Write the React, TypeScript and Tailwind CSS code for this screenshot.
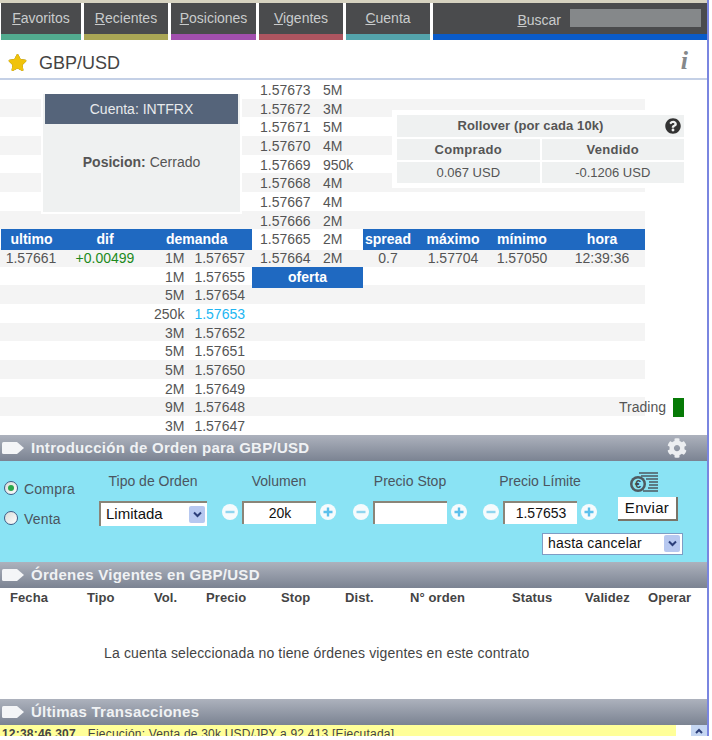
import { FaCog, FaQuestionCircle, FaStar } from 'react-icons/fa';

const TABS = [
  { key: 'F', rest: 'avoritos', w: 'w-[80px]', color: 'border-[#52ab8f]' },
  { key: 'R', rest: 'ecientes', w: 'w-[84px]', color: 'border-[#aaa655]' },
  { key: 'P', rest: 'osiciones', w: 'w-[85px]', color: 'border-[#a24fae]' },
  { key: 'V', rest: 'igentes', w: 'w-[84px]', color: 'border-[#ad5560]' },
  { key: 'C', rest: 'uenta', w: 'w-[84px]', color: 'border-[#54a4ac]' },
];

const ASKS = [
  ['1.57673', '5M'], ['1.57672', '3M'], ['1.57671', '5M'], ['1.57670', '4M'], ['1.57669', '950k'],
  ['1.57668', '4M'], ['1.57667', '4M'], ['1.57666', '2M'], ['1.57665', '2M'], ['1.57664', '2M'],
];

const BIDS = [
  ['5M', '1.57654'], ['250k', '1.57653'], ['3M', '1.57652'], ['5M', '1.57651'],
  ['5M', '1.57650'], ['2M', '1.57649'], ['9M', '1.57648'], ['3M', '1.57647'],
];

const ORDER_COLS = [
  ['Fecha', 'w-[77px]'], ['Tipo', 'w-[67px]'], ['Vol.', 'w-[52px]'], ['Precio', 'w-[75px]'], ['Stop', 'w-[64px]'],
  ['Dist.', 'w-[65px]'], ['N° orden', 'w-[102px]'], ['Status', 'w-[73px]'], ['Validez', 'w-[63px]'], ['Operar', 'w-[50px]'],
];

const ROW = 'grid h-[18.67px] w-[645px] grid-cols-[62px_86px_104px_111px_50px_80px_58px_94px] items-center';

function SectionBar({ title, children }: { title: string; children?: React.ReactNode }) {
  return (
    <div className="flex h-[26px] items-center bg-gradient-to-b from-[#adb2bd] to-[#7b8392] pl-px pr-5">
      <svg width="24" height="14" viewBox="0 0 24 14" className="mr-[6px] shrink-0">
        <path d="M1 2.5Q1 1 2.5 1H16L23 7L16 13H2.5Q1 13 1 11.5Z" fill="#f4f5f7" />
      </svg>
      <span className="flex-1 pt-[2px] text-[15px] font-bold tracking-[0.27px] text-[#f0f2f4]">{title}</span>
      {children}
    </div>
  );
}

function Chevron() {
  return (
    <div className="flex h-[17px] w-[16px] items-center justify-center rounded-[2px] bg-[#b7c8f0]">
      <svg width="9" height="7" viewBox="0 0 9 7">
        <path d="M1 1.5L4.5 5L8 1.5" fill="none" stroke="#2c3f7a" strokeWidth="2" />
      </svg>
    </div>
  );
}

function Round({ plus }: { plus?: boolean }) {
  return (
    <svg width="16" height="16" viewBox="0 0 16 16" className="shrink-0">
      <circle cx="8" cy="8" r="8" fill="#f6fbfd" />
      <path d={plus ? 'M3.5 8H12.5M8 3.5V12.5' : 'M3.5 8H12.5'} stroke={plus ? '#5cc0ec' : '#8fd4ee'} strokeWidth="2.4" />
    </svg>
  );
}

function Stepper({ label, value }: { label: string; value: string }) {
  return (
    <div className="w-[114px]">
      <div className="flex h-[22px] items-center justify-center text-[14px] text-[#4b5560]">{label}</div>
      <div className="mt-2 flex h-[23px] items-center justify-between">
        <Round />
        <div className="flex h-[23px] w-[74px] items-center justify-center border-l-2 border-t-2 border-[#8a8578] bg-white text-[14px] text-[#111]">
          {value}
        </div>
        <Round plus />
      </div>
    </div>
  );
}

function Radio({ on, label }: { on?: boolean; label: string }) {
  return (
    <div className="flex h-[18px] items-center gap-[6px]">
      <div className="flex h-[14px] w-[14px] items-center justify-center rounded-full border-[1.5px] border-[#3f5c86] bg-gradient-to-br from-[#d9dcd8] to-white">
        {on && <div className="h-[6px] w-[6px] rounded-full bg-[#2aa84a]" />}
      </div>
      <span className="mt-[4px] text-[14px] tracking-[0.2px] text-[#4b5560]">{label}</span>
    </div>
  );
}

export default function App() {
  return (
    <div className="h-[740px] w-[712px] overflow-hidden bg-white font-['Liberation_Sans',Arial,sans-serif]">
      <div className="w-[709px] border-r-2 border-[#7a86e0]">
        <div className="h-[3px] bg-[#d6d2c0]" />

        {/* Nav */}
        <div className="flex h-[37px] gap-[3px] pl-px">
          {TABS.map(t => (
            <div key={t.key} className={`flex items-center justify-center border-b-[6px] bg-[#4a4b4d] pb-[1px] text-[14px] text-[#c9cbcc] ${t.w} ${t.color}`}>
              <span><u>{t.key}</u>{t.rest}</span>
            </div>
          ))}
          <div className="flex flex-1 items-start justify-end border-b-[6px] border-[#0a5bc9] bg-[#4a4b4d] pr-[6px] pt-[6px]">
            <span className="mr-[9px] mt-px text-[14px] text-[#c9cbcc]"><u>B</u>uscar</span>
            <div className="h-[18px] w-[131px] bg-[#85888a]" />
          </div>
        </div>

        {/* Heading */}
        <div className="flex h-[40px] border-b-2 border-[#c4d0e6] pl-2 pr-[19px]">
          <FaStar className="mt-[13px] text-[19px] text-[#f0c30c] [filter:drop-shadow(0_0_0.5px_#6b5a10)]" />
          <span className="ml-3 mt-[13px] flex-1 text-[18px] leading-[21px] text-[#444]">GBP/USD</span>
          <span className="mt-[8px] font-['Liberation_Serif',serif] text-[26px] font-bold italic leading-none text-[#85888a]">i</span>
        </div>

        {/* Book */}
        <div className="relative h-[354.7px] text-[14px] text-[#555]">
          {ASKS.map(([price, size], i) => {
            const isHead = i === 8;
            const isFirst = i === 9;
            return (
              <div key={price} className={`${ROW} ${i % 2 === 1 ? 'bg-[#f4f4f4]' : ''}`}>
                {isHead && (
                  <>
                    <div className="ml-px flex h-full items-center justify-center bg-[#1f69c1] font-bold text-white">ultimo</div>
                    <div className="flex h-full items-center justify-center bg-[#1f69c1] font-bold text-white">dif</div>
                    <div className="flex h-full items-center bg-[#1f69c1] pl-[18px] font-bold text-white">demanda</div>
                  </>
                )}
                {isFirst && (
                  <>
                    <div className="text-center">1.57661</div>
                    <div className="text-center text-[#1c8a1c]">+0.00499</div>
                    <div className="flex justify-end whitespace-nowrap pr-[7px]">1M<span className="ml-[10px]">1.57657</span></div>
                  </>
                )}
                <div className={`col-start-4 flex whitespace-nowrap pl-2 ${isHead ? 'bg-white h-full items-center' : ''}`}>
                  <span className="w-[63px]">{price}</span>
                  <span>{size}</span>
                </div>
                {isHead && ['spread', 'máximo', 'mínimo'].map(h => (
                  <div key={h} className="flex h-full items-center justify-center bg-[#1f69c1] font-bold text-white">{h}</div>
                ))}
                {isHead && <div className="flex h-full items-center justify-center bg-[#1f69c1] pl-2 font-bold text-white">hora</div>}
                {isFirst && (
                  <>
                    <div className="text-center">0.7</div>
                    <div className="text-center">1.57704</div>
                    <div className="text-center">1.57050</div>
                    <div className="pl-2 text-center">12:39:36</div>
                  </>
                )}
              </div>
            );
          })}

          <div className={ROW}>
            <div className="col-span-3 flex justify-end whitespace-nowrap pr-[7px]">
              1M<span className="ml-[10px]">1.57655</span>
            </div>
            <div className="flex h-full items-center justify-center bg-[#1f69c1] font-bold text-white">oferta</div>
          </div>

          {BIDS.map(([size, price], i) => (
            <div key={price} className={`${ROW} ${i % 2 === 0 ? 'bg-[#f4f4f4]' : ''}`}>
              <div className="col-span-3 flex justify-end whitespace-nowrap pr-[7px]">
                <span>{size}</span>
                <span className={`ml-[10px] ${price === '1.57653' ? 'text-[#22b6f2]' : ''}`}>{price}</span>
              </div>
            </div>
          ))}

          {/* Cuenta */}
          <div className="absolute left-[41px] top-[12px] h-[122px] w-[201px] bg-white p-[2px]">
            <div className="h-full bg-[#eff1f1]">
              <div className="mx-[2px] flex h-[30px] items-center justify-center bg-[#55647a] text-[#e8eaec]">Cuenta: INTFRX</div>
              <div className="flex h-[58px] items-center justify-center pt-[18px]">
                <span className="font-bold">Posicion:</span>&nbsp;Cerrado
              </div>
            </div>
          </div>

          {/* Rollover */}
          <div className="absolute left-[392px] top-[30px] w-[297px] bg-white px-[5px] py-[5px] text-[13px]">
            <div className="relative flex h-[22px] items-center justify-center bg-[#eff1f1] pr-[20px] font-bold tracking-[0.1px]">
              Rollover (por cada 10k)
              <FaQuestionCircle className="absolute right-[3px] top-[3px] text-[16px] text-[#333]" />
            </div>
            <div className="mt-[2px] grid grid-cols-2 gap-x-[2px] gap-y-[2px]">
              <div className="flex h-[21px] items-center justify-center bg-[#eff1f1] text-[13px] font-bold tracking-[0.3px]">Comprado</div>
              <div className="flex h-[21px] items-center justify-center bg-[#eff1f1] text-[13px] font-bold tracking-[0.3px]">Vendido</div>
              <div className="flex h-[21px] items-center justify-center bg-[#eff1f1]">0.067 USD</div>
              <div className="flex h-[21px] items-center justify-center bg-[#eff1f1]">-0.1206 USD</div>
            </div>
          </div>

          {/* Trading */}
          <div className="absolute bottom-[18px] left-[619px] flex h-[19px] items-center gap-[7px]">
            <span>Trading</span>
            <div className="h-[19px] w-[11px] bg-[#067a06]" />
          </div>
        </div>

        {/* Order entry */}
        <SectionBar title="Introducción de Orden para GBP/USD">
          <FaCog className="text-[20px] text-[#eceef1]" />
        </SectionBar>
        <div className="h-[101px] bg-[#8ae3f4] pt-[10px]">
          <div className="flex h-[55px]">
            <div className="w-[99px] pl-[4px] pt-[8px]">
              <Radio on label="Compra" />
              <div className="mt-[12px]"><Radio label="Venta" /></div>
            </div>
            <div className="w-[108px]">
              <div className="flex h-[22px] items-center justify-center text-[14px] text-[#4b5560]">Tipo de Orden</div>
              <div className="mt-2 flex h-[25px] items-center justify-between border-l-2 border-t-2 border-[#8a8578] bg-white pl-[5px] pr-[2px] text-[15px] text-[#111]">
                Limitada
                <Chevron />
              </div>
            </div>
            <div className="ml-[15px]"><Stepper label="Volumen" value="20k" /></div>
            <div className="ml-[17px]"><Stepper label="Precio Stop" value="" /></div>
            <div className="ml-[16px]"><Stepper label="Precio Límite" value="1.57653" /></div>
            <div className="ml-[21px] w-[60px]">
              <svg width="30" height="22" viewBox="0 0 30 22" className="ml-[11px]">
                <path d="M10 2H29M12 5H29M17 8H29M20 11H29M20 14H29M19 17H29M14 20H29" stroke="#4e5a60" strokeWidth="1.7" />
                <circle cx="9" cy="13" r="8" fill="#4e5a60" />
                <circle cx="9" cy="13" r="5.5" fill="#8ae3f4" />
                <text x="9" y="17" fontSize="11" fontWeight="700" textAnchor="middle" fill="#3e484d">€</text>
              </svg>
              <div className="mt-[4px] flex h-[24px] items-center justify-center border-b-2 border-r-2 border-[#7a7468] bg-white pt-[2px] text-[15px] tracking-[0.3px] text-[#111]">
                Enviar
              </div>
            </div>
          </div>
          <div className="mt-[7px] flex justify-end pr-[24px]">
            <div className="flex h-[22px] w-[141px] items-center justify-between border border-[#7f9cc4] bg-white pl-[5px] pr-[2px] text-[14px] tracking-[0.2px] text-[#111]">
              hasta cancelar
              <Chevron />
            </div>
          </div>
        </div>

        {/* Open orders */}
        <SectionBar title="Órdenes Vigentes en GBP/USD" />
        <div className="h-[111px] text-[#444]">
          <div className="flex h-[20px] items-center pl-[10px] text-[13px] font-bold tracking-[0.1px]">
            {ORDER_COLS.map(([label, w]) => (
              <div key={label} className={`shrink-0 whitespace-nowrap ${w}`}>{label}</div>
            ))}
          </div>
          <div className="pl-[104px] pt-[36px] text-[14px] leading-[18px] tracking-[0.15px]">
            La cuenta seleccionada no tiene órdenes vigentes en este contrato
          </div>
        </div>

        {/* Last transactions */}
        <SectionBar title="Últimas Transacciones" />
        <div className="flex h-[11px] overflow-hidden">
          <div className="w-[676px] whitespace-nowrap bg-[#ffff99] pl-[2px] pt-[2px] text-[12px] leading-[14px] tracking-[0.2px] text-[#444]">
            <span className="font-bold">12:38:46.307</span>
            <span className="ml-[12px]">Ejecución: Venta de 30k USD/JPY a 92.413 [Ejecutada]</span>
          </div>
          <div className="ml-[15px] flex w-[16px] justify-center bg-[#c5d6f2]">
            <svg width="8" height="6" viewBox="0 0 8 6" className="mt-[3px]">
              <path d="M1 5L4 2L7 5" fill="none" stroke="#2c3f7a" strokeWidth="2" />
            </svg>
          </div>
        </div>
      </div>
    </div>
  );
}
